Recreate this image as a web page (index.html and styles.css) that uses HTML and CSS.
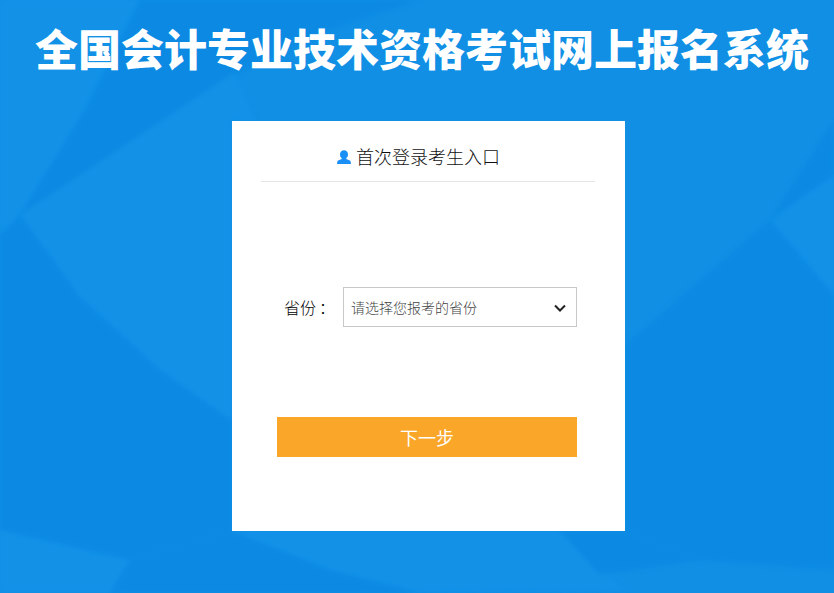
FILE: index.html
```html
<!DOCTYPE html>
<html lang="zh-CN">
<head>
    <meta charset="UTF-8">
    <title>全国会计专业技术资格考试网上报名系统</title>
    <link rel="stylesheet" href="styles.css">
</head>
<body>
    <!-- 背景多边形 -->
    <svg class="page-bg" viewBox="0 0 834 593" preserveAspectRatio="none" aria-hidden="true">
        <polygon class="light" points="0,0 140,0 85,110 20,215 0,235"/>
        <polygon class="dark" points="140,0 420,0 330,30 235,75 110,160 20,215 85,110"/>
        <polygon class="light" points="20,215 235,72 255,121 232,121 232,421 160,370 80,297"/>
        <polygon class="dark" points="0,235 20,215 80,297 160,370 232,421 232,531 130,560 0,530"/>
        <polygon class="light" points="0,530 130,560 110,593 0,593"/>
        <polygon class="dark" points="110,593 130,560 232,531 330,570 420,593"/>
        <polygon class="light" points="232,531 560,531 625,590 420,593 330,570"/>
        <polygon class="dark" points="625,345 770,220 834,295 834,570 700,560 625,531"/>
        <polygon class="light" points="770,220 834,175 834,295"/>
        <polygon class="dark" points="834,120 834,175 770,220"/>
        <polygon class="dark" points="560,531 625,531 700,560 600,575"/>
    </svg>

    <h1 class="page-title">全国会计专业技术资格考试网上报名系统</h1>

    <div class="login">
        <div class="login-title">
            <svg class="user-icon" viewBox="0 0 14 14" aria-hidden="true">
                <path d="M7 .3C4.600.3 3 2 3 4.400c0 1.600.7 3 1.700 3.700v1L.6 10.800 0 14h14l-.6-3.200-4.100-1.700v-1c1-.7 1.700-2.100 1.700-3.700C11 2 9.400.3 7 .3z"/>
            </svg>
            首次登录考生入口
        </div>

        <div class="login-form">
            <div class="login-input">
                <label for="province">省份<span class="colon">：</span></label>
                <div class="select-box">
                    <select id="province">
                        <option>请选择您报考的省份</option>
                    </select>
                    <svg class="select-arrow" viewBox="0 0 12 8" aria-hidden="true">
                        <path d="M1 1.500l5 5 5-5"/>
                    </svg>
                </div>
            </div>
            <a class="login-button" href="javascript:;">下一步</a>
        </div>
    </div>
</body>
</html>
```
FILE: styles.css
```css
* {
    box-sizing: border-box;
}

html,
body {
    height: 100%;
}

body {
    margin: 0;
    background-color: #108fe5;
    font-family: "Noto Sans CJK SC", "Liberation Sans", sans-serif;
    overflow: hidden;
}

.page-bg {
    position: absolute;
    top: 0;
    left: 0;
    width: 100%;
    height: 100%;
    z-index: -1;
    filter: blur(2px);
}

.page-bg .light {
    fill: #1291e7;
}

.page-bg .dark {
    fill: #0c8ae3;
}

.page-title {
    margin: 0;
    height: 121px;
    padding: 17px 0 0 10px;
    color: #fff;
    font-size: 43px;
    font-weight: 900;
    line-height: 60px;
    text-align: center;
    white-space: nowrap;
}

.login {
    width: 393px;
    height: 410px;
    margin-left: 232px;
    padding: 0 30px 0 29px;
    background-color: #fff;
    font-weight: 300;
}

.login-title {
    display: flex;
    justify-content: center;
    align-items: center;
    height: 61px;
    padding: 9px 19px 0 0;
    border-bottom: 1px solid #e6e6e6;
    color: #111;
    font-size: 18px;
}

.user-icon {
    width: 14px;
    height: 14px;
    margin: 3px 5px 0 0;
    fill: #1a8ff5;
}

.login-form {
    width: 300px;
    margin: 105px 0 0 16px;
}

.login-input {
    display: flex;
    align-items: center;
}

.login-input label {
    width: 66px;
    padding-left: 7px;
    color: #000;
    font-size: 16px;
}

.colon {
    margin-left: 3px;
    font-family: "Noto Sans CJK TC", sans-serif;
}

.select-box {
    position: relative;
    width: 234px;
    height: 40px;
}

.select-box select {
    display: block;
    width: 100%;
    height: 100%;
    padding-left: 7px;
    border: 1px solid #c8c8c8;
    border-radius: 0;
    outline: none;
    background: #fff;
    color: #444;
    font-family: inherit;
    font-size: 14px;
    font-weight: 300;
    appearance: none;
}

.select-arrow {
    position: absolute;
    top: 17px;
    right: 11px;
    width: 12px;
    height: 8px;
    fill: none;
    stroke: #222;
    stroke-width: 2;
    pointer-events: none;
}

.login-button {
    display: block;
    height: 40px;
    margin-top: 90px;
    background-color: #f9a629;
    color: #fff;
    font-size: 18px;
    font-weight: 400;
    line-height: 40px;
    text-align: center;
    text-decoration: none;
}
```
